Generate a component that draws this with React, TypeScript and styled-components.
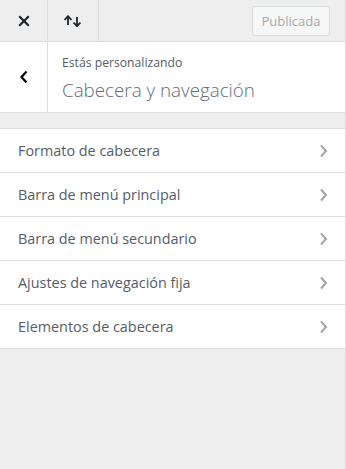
import { createGlobalStyle, styled } from "styled-components";

const GlobalStyle = createGlobalStyle`
  * { box-sizing: border-box; }
  body {
    margin: 0;
    background: #eeeeee;
    font-family: "Open Sans", "Liberation Sans", sans-serif;
    -webkit-font-smoothing: antialiased;
  }
`;

const sections = [
  "Formato de cabecera",
  "Barra de menú principal",
  "Barra de menú secundario",
  "Ajustes de navegación fija",
  "Elementos de cabecera",
];

export default function App() {
  return (
    <>
      <GlobalStyle />
      <Panel>
        <TopBar>
          <IconButton aria-label="Cerrar">
            <svg width="12" height="12" viewBox="0 0 12 12">
              <path
                d="M2 2 L10 10 M10 2 L2 10"
                stroke="#1d2327"
                strokeWidth="2.2"
                strokeLinecap="square"
              />
            </svg>
          </IconButton>
          <IconButton $wide aria-label="Ordenar">
            <svg width="20" height="12" viewBox="0 0 20 12">
              <path d="M5 10 V2" stroke="#1d2327" strokeWidth="1.8" />
              <path d="M1.5 5 L5 1.2 L8.5 5" stroke="#1d2327" strokeWidth="1.8" fill="none" />
              <path d="M14 2 V10.5" stroke="#1d2327" strokeWidth="1.8" />
              <path d="M10.5 7.5 L14 11.2 L17.5 7.5" stroke="#1d2327" strokeWidth="1.8" fill="none" />
            </svg>
          </IconButton>
          <Spacer />
          <PublishButton disabled>Publicada</PublishButton>
        </TopBar>

        <Header>
          <BackButton aria-label="Volver">
            <svg width="10" height="14" viewBox="0 0 10 14">
              <path
                d="M7.5 1.5 L2.5 7 L7.5 12.5"
                stroke="#000"
                strokeWidth="2.2"
                fill="none"
              />
            </svg>
          </BackButton>
          <Titles>
            <Eyebrow>Estás personalizando</Eyebrow>
            <Title>Cabecera y navegación</Title>
          </Titles>
        </Header>

        <SectionList>
          {sections.map((name) => (
            <SectionItem key={name}>
              <span>{name}</span>
              <svg width="9" height="14" viewBox="0 0 9 14">
                <path
                  d="M2 1.5 L7 7 L2 12.5"
                  stroke="#a0a5aa"
                  strokeWidth="2"
                  fill="none"
                />
              </svg>
            </SectionItem>
          ))}
        </SectionList>
      </Panel>
    </>
  );
}

const Panel = styled.div`
  width: 346px;
  height: 469px;
  background: #eeeeee;
  border-right: 1px solid #dddddd;
  display: flex;
  flex-direction: column;
`;

const TopBar = styled.div`
  height: 42px;
  display: flex;
  align-items: center;
  border-bottom: 1px solid #dddddd;
`;

const IconButton = styled.button<{ $wide?: boolean }>`
  width: ${({ $wide }) => ($wide ? "51px" : "48px")};
  height: 41px;
  padding: 0;
  border: 0;
  border-right: 1px solid #dddddd;
  background: transparent;
  display: flex;
  align-items: center;
  justify-content: center;
`;

const Spacer = styled.div`
  flex: 1;
`;

const PublishButton = styled.button`
  height: 30px;
  width: 78px;
  margin-right: 15px;
  padding: 0;
  border: 1px solid #dcdcde;
  border-radius: 3px;
  background: #f6f7f7;
  color: #a7aaad;
  font-family: inherit;
  font-size: 13px;
`;

const Header = styled.div`
  height: 71px;
  display: flex;
  background: #ffffff;
  border-bottom: 1px solid #dddddd;
`;

const BackButton = styled.button`
  width: 48px;
  padding: 0;
  border: 0;
  border-right: 1px solid #dddddd;
  background: transparent;
  display: flex;
  align-items: center;
  justify-content: center;
`;

const Titles = styled.div`
  display: flex;
  flex-direction: column;
  justify-content: center;
  padding: 2px 0 0 14px;
`;

const Eyebrow = styled.span`
  color: #555d66;
  font-size: 12.2px;
  line-height: 20px;
`;

const Title = styled.span`
  margin-top: 3px;
  color: #646c74;
  font-size: 18.8px;
  font-weight: 300;
  line-height: 28px;
`;

const SectionList = styled.ul`
  list-style: none;
  margin: 15px 0 0;
  padding: 0;
  background: #ffffff;
  border-top: 1px solid #dddddd;
`;

const SectionItem = styled.li`
  height: 44px;
  display: flex;
  align-items: center;
  justify-content: space-between;
  padding: 0 17px 0 18px;
  border-bottom: 1px solid #dddddd;
  color: #555d66;
  font-size: 14.4px;
`;
